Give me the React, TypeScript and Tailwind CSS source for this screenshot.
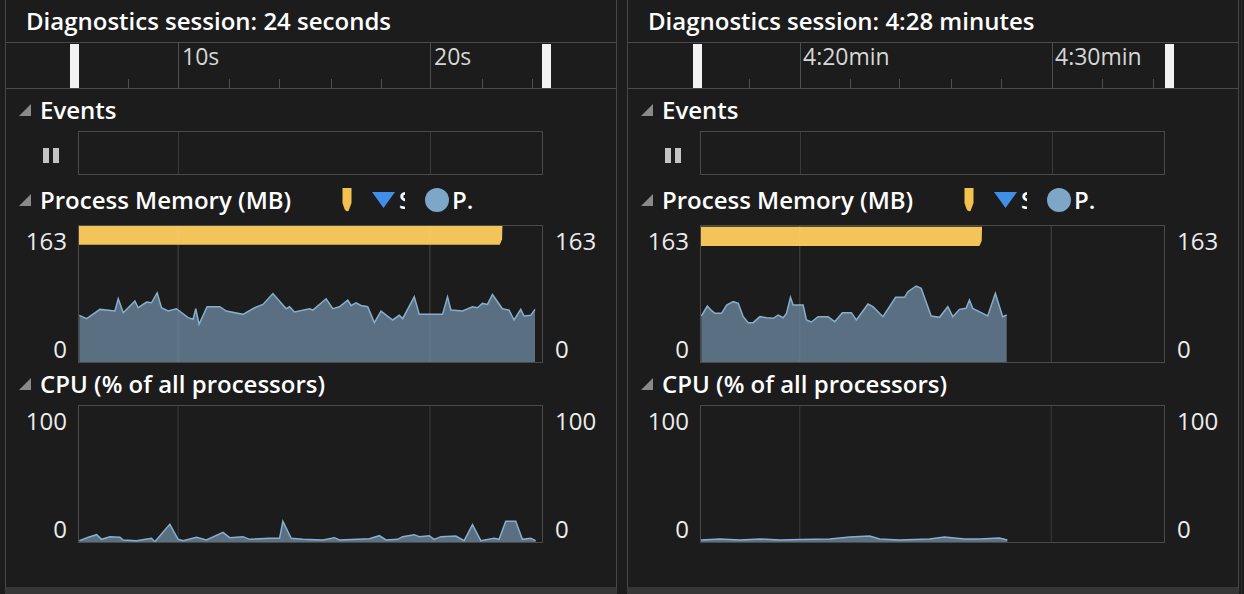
import React from 'react';

type Pt = [number, number];

interface PanelData {
  title: string;
  handles: number[];
  majors: number[];
  minors: number[];
  labels: { x: number; text: string }[];
  mem: { view: string; grid: number[]; bar: string; pts: Pt[]; base: number };
  cpu: { view: string; grid: number[]; pts: Pt[]; base: number };
}

// memory / cpu samples, traced off the capture (chart-local units)
const memLeft: Pt[] = [
  [28, 288], [50, 298], [90, 270], [135, 275], [145, 238], [160, 280], [195, 245], [205, 265], [230, 248],
  [245, 250], [262, 220], [275, 265], [295, 275], [320, 268], [355, 295], [370, 300], [378, 268], [388, 315],
  [412, 262], [450, 262], [470, 275], [520, 285], [555, 265], [580, 255], [610, 222], [650, 268], [660, 262],
  [675, 278], [720, 268], [730, 272], [770, 238], [790, 268], [810, 262], [835, 242], [845, 258], [860, 250],
  [875, 258], [895, 262], [915, 310], [935, 275], [970, 302], [990, 288], [1000, 298], [1035, 232], [1050, 285],
  [1120, 285], [1135, 232], [1145, 272], [1180, 275], [1210, 262], [1225, 265], [1240, 252], [1255, 255],
  [1270, 225], [1300, 268], [1320, 272], [1335, 302], [1355, 270], [1365, 290], [1385, 288], [1398, 270],
];

const cpuLeft: Pt[] = [
  [28, 122], [55, 112], [80, 104], [95, 118], [120, 110], [150, 112], [160, 120], [200, 122], [245, 115],
  [255, 125], [300, 73], [325, 118], [340, 122], [380, 112], [410, 120], [460, 97], [480, 113], [520, 110],
  [540, 118], [600, 115], [630, 115], [640, 64], [665, 115], [700, 118], [760, 120], [795, 113], [810, 120],
  [900, 116], [930, 107], [950, 120], [985, 118], [1000, 110], [1035, 104], [1050, 110], [1080, 107],
  [1095, 118], [1115, 110], [1160, 108], [1185, 122], [1210, 74], [1235, 122], [1275, 115], [1290, 118],
  [1310, 64], [1340, 64], [1360, 118], [1385, 115], [1400, 122],
];

const memRight: Pt[] = [
  [244, 408], [262, 378], [275, 392], [285, 400], [305, 400], [320, 375], [340, 365], [355, 370], [370, 410],
  [385, 428], [400, 428], [420, 410], [440, 413], [460, 415], [475, 405], [490, 413], [500, 400], [512, 352],
  [520, 375], [550, 375], [560, 420], [575, 426], [595, 410], [625, 410], [645, 425], [668, 398], [695, 398],
  [710, 420], [745, 372], [760, 380], [790, 410], [815, 372], [828, 352], [855, 352], [865, 335], [890, 318],
  [905, 325], [935, 408], [960, 412], [985, 380], [1000, 410], [1020, 388], [1040, 385], [1050, 360],
  [1060, 385], [1090, 400], [1105, 408], [1128, 340], [1150, 410], [1162, 405],
];

const cpuRight: Pt[] = [
  [701, 540], [720, 539], [740, 540], [760, 539], [780, 540], [800, 539.5], [830, 539], [850, 537], [870, 536],
  [880, 539], [900, 540], [930, 539], [945, 537], [965, 539], [980, 539], [1000, 538], [1008, 540],
];

const panels: PanelData[] = [
  {
    title: 'Diagnostics session: 24 seconds',
    handles: [64, 536],
    majors: [172, 424],
    minors: [122, 223, 273, 325, 375, 476, 526],
    labels: [{ x: 176, text: '10s' }, { x: 428, text: '20s' }],
    mem: {
      view: '27 18 1392 411',
      grid: [325, 1082],
      bar: '27,18 1300,18 1299,58 1292,75 27,75',
      pts: memLeft,
      base: 429,
    },
    cpu: { view: '27 -282 1392 408', grid: [325, 1082], pts: cpuLeft, base: 126 },
  },
  {
    title: 'Diagnostics session: 4:28 minutes',
    handles: [65, 537],
    majors: [172, 424],
    minors: [121, 222, 271, 323, 373, 474, 525],
    labels: [{ x: 175, text: '4:20min' }, { x: 427, text: '4:30min' }],
    mem: {
      view: '243 138 1392 408',
      grid: [540, 1296],
      bar: '243,140 1088,140 1087,182 1080,198 243,198',
      pts: memRight,
      base: 546,
    },
    cpu: { view: '701 406 464 136', grid: [800, 1052], pts: cpuRight, base: 542 },
  },
];

function line(pts: Pt[]) {
  return pts.map((p, i) => `${i ? 'L' : 'M'}${p[0]},${p[1]}`).join(' ');
}

function area(pts: Pt[], base: number) {
  const first = pts[0];
  const last = pts[pts.length - 1];
  return `M${first[0]},${base} ${line(pts).replace(/^M/, 'L')} L${last[0]},${base} Z`;
}

function Caret() {
  return (
    <svg width="12" height="12" viewBox="0 0 12 12" className="shrink-0">
      <polygon points="12,0 12,12 0,12" fill="#8a8a8a" />
    </svg>
  );
}

function Heading({ text, h, children }: { text: string; h: string; children?: React.ReactNode }) {
  return (
    <div className={`flex items-center pl-[13px] ${h}`}>
      <Caret />
      <span className="ml-[9px] w-[302px] text-[24px] font-semibold leading-none text-white">{text}</span>
      {children}
    </div>
  );
}

function Ruler({ p }: { p: PanelData }) {
  return (
    <div className="relative h-[46px] border-b border-[#4a4a4a]">
      {p.majors.map((x) => (
        <div key={x} className="absolute top-0 bottom-0 w-px bg-[#4f4f4f]" style={{ left: x }} />
      ))}
      {p.minors.map((x) => (
        <div key={x} className="absolute bottom-0 h-[9px] w-px bg-[#4f4f4f]" style={{ left: x }} />
      ))}
      {p.labels.map((l) => (
        <span key={l.x} className="absolute top-0 text-[23px] leading-[26px] text-[#d6d6d6]" style={{ left: l.x }}>
          {l.text}
        </span>
      ))}
      {p.handles.map((x) => (
        <div key={x} className="absolute top-[1px] bottom-0 w-[9px] bg-[#f2f2f2]" style={{ left: x }} />
      ))}
    </div>
  );
}

function Scale({ top, bottom }: { top: string; bottom: string }) {
  return (
    <div className="flex h-full flex-col justify-between pt-[2px] text-[24px] leading-[28px] text-[#ececec]">
      <span>{top}</span>
      <span>{bottom}</span>
    </div>
  );
}

function Panel({ p }: { p: PanelData }) {
  return (
    <div className="flex h-[594px] w-[612px] shrink-0 flex-col border-x border-b-[7px] border-[#474747] border-b-[#363636]">
      {/* title */}
      <div className="flex h-[43px] items-center border-b border-[#4a4a4a] pl-[20px]">
        <span className="text-[24px] font-semibold leading-none text-white">{p.title}</span>
      </div>

      <Ruler p={p} />

      {/* events */}
      <Heading text="Events" h="h-[42px]" />
      <div className="grid grid-cols-[72px_465px_1fr]">
        <div className="flex items-center gap-[4px] pl-[37px] pt-[4px]">
          <div className="h-[15px] w-[6px] bg-[#c4c4c4]" />
          <div className="h-[15px] w-[6px] bg-[#c4c4c4]" />
        </div>
        <div className="relative h-[44px] border border-[#4a4a4a]">
          <div className="absolute top-0 bottom-0 left-[99px] w-px bg-[#3a3a3a]" />
          <div className="absolute top-0 bottom-0 left-[351px] w-px bg-[#3a3a3a]" />
        </div>
        <div />
      </div>

      {/* memory */}
      <Heading text="Process Memory (MB)" h="h-[50px]">
        <svg width="10" height="24" viewBox="0 0 10 24" className="shrink-0">
          <path d="M0.5 0 H9.5 V15 L6.5 23 Q4 24 2.5 21 L0.5 15 Z" fill="#f2c14e" />
        </svg>
        <svg width="23" height="16" viewBox="0 0 23 16" className="ml-[20px] shrink-0">
          <polygon points="0,0 23,0 11.5,16" fill="#3f8fe8" />
        </svg>
        <span className="ml-[4px] w-[6px] overflow-hidden text-[24px] font-semibold leading-none text-white">S</span>
        <div className="ml-[20px] h-[24px] w-[24px] shrink-0 rounded-full bg-[#7ea6c6]" />
        <span className="ml-[3px] text-[24px] font-semibold leading-none text-white">P.</span>
      </Heading>
      <div className="grid grid-cols-[72px_465px_1fr]">
        <div className="pr-[11px] text-right">
          <Scale top="163" bottom="0" />
        </div>
        <div className="h-[138px] border border-[#4a4a4a]">
          <svg viewBox={p.mem.view} preserveAspectRatio="none" className="block h-full w-full">
            {p.mem.grid.map((x) => (
              <line key={x} x1={x} x2={x} y1="-1000" y2="2000" stroke="#3a3a3a" vectorEffect="non-scaling-stroke" />
            ))}
            <polygon points={p.mem.bar} fill="#f2c45a" />
            <path d={area(p.mem.pts, p.mem.base)} fill="#5a7082" />
            <path d={line(p.mem.pts)} fill="none" stroke="#86aecd" strokeWidth="1.5" vectorEffect="non-scaling-stroke" />
            {p.mem.grid.map((x) => (
              <line key={`o${x}`} x1={x} x2={x} y1="-1000" y2="2000" stroke="#ffffff" strokeOpacity="0.07" vectorEffect="non-scaling-stroke" />
            ))}
          </svg>
        </div>
        <div className="pl-[12px]">
          <Scale top="163" bottom="0" />
        </div>
      </div>

      {/* cpu */}
      <Heading text="CPU (% of all processors)" h="h-[42px]" />
      <div className="grid grid-cols-[72px_465px_1fr]">
        <div className="pr-[11px] text-right">
          <Scale top="100" bottom="0" />
        </div>
        <div className="h-[138px] border border-[#4a4a4a]">
          <svg viewBox={p.cpu.view} preserveAspectRatio="none" className="block h-full w-full">
            {p.cpu.grid.map((x) => (
              <line key={x} x1={x} x2={x} y1="-1000" y2="2000" stroke="#3a3a3a" vectorEffect="non-scaling-stroke" />
            ))}
            <path d={area(p.cpu.pts, p.cpu.base)} fill="#5a7082" />
            <path d={line(p.cpu.pts)} fill="none" stroke="#86aecd" strokeWidth="1.5" vectorEffect="non-scaling-stroke" />
          </svg>
        </div>
        <div className="pl-[12px]">
          <Scale top="100" bottom="0" />
        </div>
      </div>
    </div>
  );
}

export default function App() {
  return (
    <div className="flex h-[594px] w-[1244px] overflow-hidden bg-[#1c1c1c] pl-[5px] font-['Open_Sans',sans-serif]">
      <Panel p={panels[0]} />
      <div className="w-[10px] shrink-0" />
      <Panel p={panels[1]} />
      <div className="ml-[2px] h-full w-px bg-[#2c2c2c]" />
    </div>
  );
}
